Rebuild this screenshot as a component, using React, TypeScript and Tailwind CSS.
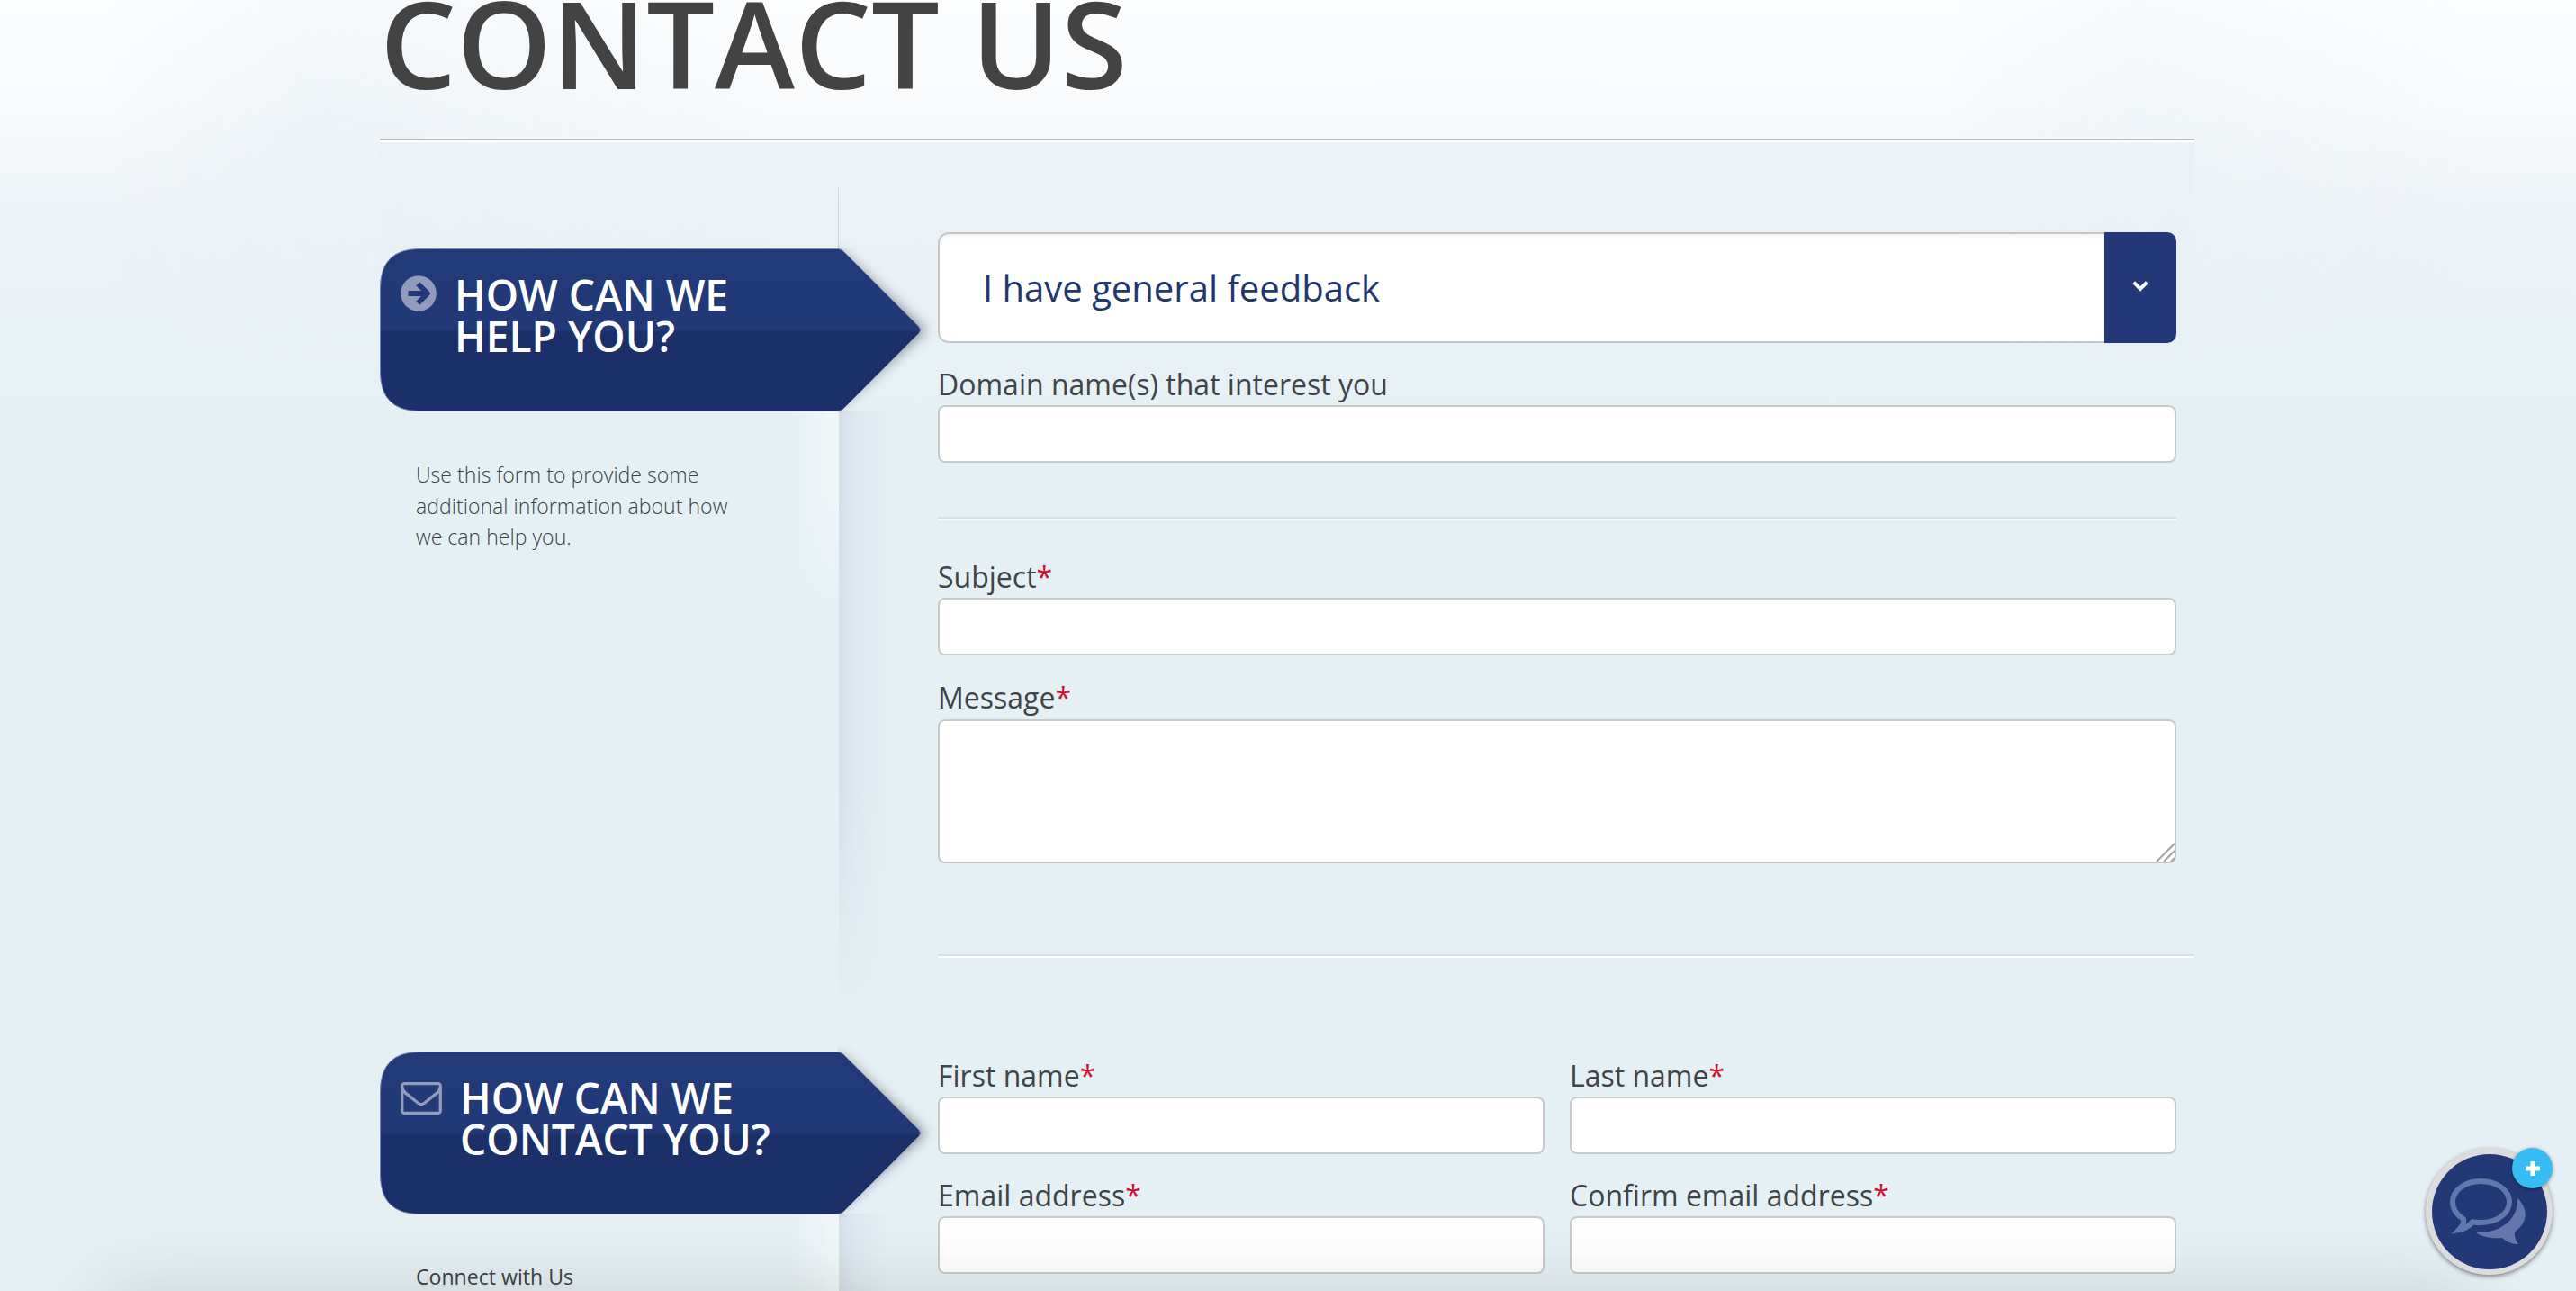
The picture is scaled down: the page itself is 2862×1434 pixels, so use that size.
import React from "react";

function ArrowCircleIcon() {
  return (
    <svg viewBox="0 0 40 40" className="block h-[40px] w-[40px]" aria-hidden="true">
      <circle cx="20" cy="20" r="19.800" fill="#919bbc" />
      <path d="M8.500 20H30M19.300 9.300L30 20L19.300 30.700" fill="none" stroke="#22387a" strokeWidth="5.800" strokeLinejoin="round" />
    </svg>
  );
}

function EnvelopeIcon() {
  return (
    <svg viewBox="0 256 1792 1408" className="block h-[36px] w-[46px] fill-white/50" aria-hidden="true">
      <path d="M1664 1504v-768q-32 36-69 66-268 206-426 338-51 43-83 67t-86.5 48.5-102.500 24.5h-2q-48 0-102.500-24.5t-86.5-48.5-83-67q-158-132-426-338-37-30-69-66v768q0 13 9.5 22.5t22.5 9.5h1472q13 0 22.5-9.5t9.5-22.5zm0-1051v-24.500l-.5-13-3-12.5-5.5-9-9-7.5-14-2.5h-1472q-13 0-22.5 9.5t-9.5 22.5q0 168 147 284 193 152 401 317 6 5 35 29.5t46 37.5 44.5 31.5 50.5 27.5 43 9h2q20 0 43-9t50.5-27.5 44.5-31.5 46-37.5 35-29.5q208-165 401-317 54-43 100.500-115.500t46.500-131.500zm128-37v1088q0 66-47 113t-113 47h-1472q-66 0-113-47t-47-113v-1088q0-66 47-113t113-47h1472q66 0 113 47t47 113z" />
    </svg>
  );
}

function Tag({ id, icon, first, second }: { id: string; icon: React.ReactNode; first: string; second: string }) {
  const shape =
    "M44 .5H509Q513 .5 516 4L599 87Q602 90.500 599 94L516 177Q513 180.500 509 180.500H44Q.5 180.500 .5 137V44Q.5 .5 44 .5Z";
  return (
    <div className="relative h-[181px] w-[601px]">
      <svg viewBox="0 0 601 181" className="absolute inset-0 h-[181px] w-[601px] overflow-visible" aria-hidden="true">
        <defs>
          <linearGradient id={id} x1="0" y1="0" x2="0" y2="1">
            <stop offset="0" stopColor="#223a78" />
            <stop offset=".495" stopColor="#223977" />
            <stop offset=".515" stopColor="#1b2f69" />
            <stop offset="1" stopColor="#1b2f69" />
          </linearGradient>
          <filter id={id + "-blur"} x="-10%" y="-20%" width="120%" height="140%">
            <feGaussianBlur stdDeviation="7" />
          </filter>
          <clipPath id={id + "-clip"}>
            <rect x="509" y="-10" width="130" height="200" />
          </clipPath>
        </defs>
        <g clipPath={`url(#${id}-clip)`}>
          <path d="M440 6H514L606 91L512 173H440Z" fill="#20262c" fillOpacity=".55" filter={`url(#${id}-blur)`} />
        </g>
        <path d={shape} fill={`url(#${id})`} stroke="#7285b4" strokeWidth="1" />
      </svg>
      <div className="relative flex pt-[29px] pl-[23px]">
        {icon}
        <h2 className="ml-[20px] text-[46.200px] leading-[46px] font-semibold whitespace-nowrap text-white">
          {first}
          <br />
          {second}
        </h2>
      </div>
    </div>
  );
}

function Label({ text, required }: { text: string; required?: boolean }) {
  return (
    <label className="block h-[39px] text-[32px] leading-[32px] text-[#3f4447]">
      {text}
      {required && <span className="text-[#cf1237]">*</span>}
    </label>
  );
}

function Field({ label, required }: { label: string; required?: boolean }) {
  return (
    <div>
      <Label text={label} required={required} />
      <input
        aria-label={label}
        className="block h-[64px] w-full rounded-[8px] border-2 border-[#c8c9cc] bg-white shadow-[inset_0_2px_2px_rgba(0,0,0,0.02)]"
      />
    </div>
  );
}

function Divider() {
  return (
    <div>
      <div className="h-[2px] bg-[#dadfe2]" />
      <div className="h-[2px] bg-white" />
    </div>
  );
}

/* Soft fold that separates the side column from the form */
function Fold({ className }: { className: string }) {
  return (
    <div className={"absolute left-[450px] flex w-[125px] " + className}>
      <div className="h-[220px] w-[60px] bg-linear-to-r from-white/0 from-10% to-white/45 to-85% [mask-image:linear-gradient(to_bottom,black_40%,transparent)]" />
      <div className="h-full w-[55px] bg-linear-to-r from-[#cbd5e2]/60 via-[#cbd5e2]/30 via-35% to-[#cbd5e2]/0 [mask-image:linear-gradient(to_bottom,black_60%,transparent_95%)]" />
    </div>
  );
}

export default function App() {
  return (
    <div className="relative h-[1434px] w-[2862px] overflow-hidden bg-[#e5f0f5] font-['Open_Sans',sans-serif]">
      <div className="absolute inset-x-0 top-0 h-[460px] bg-[linear-gradient(to_bottom,#fcfdfe_0%,#f8fafc_25%,#f3f7fa_38%,#ebf2f7_60%,#e5f0f5_100%)]" />
      <div className="absolute top-0 left-[120px] h-[420px] w-[2620px] bg-[linear-gradient(to_right,transparent,rgba(230,240,246,0.55)_9%,rgba(230,240,246,0.45)_13%,transparent_28%,transparent_78%,rgba(230,240,246,0.4)_86%,transparent)] [mask-image:linear-gradient(to_bottom,rgba(0,0,0,0.5),black_35%,transparent)]" />

      <main className="relative mx-[422px] w-[2016px]">
        <div className="flex h-[154px] flex-col">
          <h1 className="-mt-[20px] text-[134.400px] leading-[134px] font-semibold whitespace-nowrap text-[#434343]">CONTACT US</h1>
        </div>
        <div className="h-[2px] bg-[#bcbfc2]" />
        <div className="h-[2px] bg-white" />

        <section className="relative flex h-[902px] bg-linear-to-b from-[#e7f0f5]/50 to-[#e5f0f5]/0 to-30%">
          <div className="absolute top-[51px] left-[509px] h-[80px] w-px bg-[#d3d8dd]" />
          <Fold className="top-[298px] h-[700px]" />
          <aside className="relative w-[620px] pt-[118px]">
            <Tag
              id="tag-help"
              icon={
                <div className="pt-[1px]">
                  <ArrowCircleIcon />
                </div>
              }
              first="HOW CAN WE"
              second="HELP YOU?"
            />
            <p className="mt-[53px] ml-[40px] w-[360px] text-[23.100px] leading-[34.500px] font-light text-[#3a4044]">
              Use this form to provide some additional information about how we can help you.
            </p>
          </aside>

          <div className="w-[1396px] pt-[100px]">
            <div className="w-[1376px]">
              <div className="flex h-[123px]">
                <div className="flex flex-1 items-center rounded-l-[12px] border-2 border-r-0 border-[#c6c7ca] bg-white pl-[48px] text-[40px] text-[#22376f] shadow-[inset_0_4px_4px_-1px_rgba(0,0,0,0.05)]">
                  I have general feedback
                </div>
                <div className="flex w-[80px] items-center justify-center rounded-r-[10px] bg-[#233977]">
                  <svg viewBox="0 0 18 12" className="-mt-[3px] h-[12px] w-[18px]" aria-hidden="true">
                    <path d="M1.700 1.700L9 9L16.300 1.700" fill="none" stroke="#fff" strokeWidth="4" />
                  </svg>
                </div>
              </div>
              <div className="pt-[30px]">
                <Field label="Domain name(s) that interest you" />
              </div>
              <div className="pt-[60px]">
                <Divider />
              </div>
              <div className="pt-[47px]">
                <Field label="Subject" required />
              </div>
              <div className="relative pt-[31px]">
                <Label text="Message" required />
                <textarea
                  aria-label="Message"
                  className="mt-[1px] block h-[160px] w-full resize-none rounded-[8px] border-2 border-[#c8c9cc] bg-white"
                />
                <svg viewBox="0 0 22 22" className="absolute right-[1px] bottom-[1px] h-[22px] w-[22px]" aria-hidden="true">
                  <path d="M1 21L21 1M9 21L21 9M17 21L21 17" stroke="#a3a3a3" strokeWidth="2" fill="none" />
                </svg>
              </div>
            </div>
            <div className="pt-[101px]">
              <Divider />
            </div>
          </div>
        </section>

        <section className="relative flex h-[374px]">
          <Fold className="top-[288px] h-[700px]" />
          <aside className="relative w-[620px] pt-[108px]">
            <Tag
              id="tag-contact"
              icon={
                <div className="pt-[5px]">
                  <EnvelopeIcon />
                </div>
              }
              first="HOW CAN WE"
              second="CONTACT YOU?"
            />
            <p className="mt-[52px] ml-[40px] text-[23.100px] leading-[34px] whitespace-nowrap text-[#3a4044]">Connect with Us</p>
          </aside>
          <div className="grid w-[1376px] grid-cols-2 content-start gap-x-[28px] gap-y-[30px] pt-[119px]">
            <Field label="First name" required />
            <Field label="Last name" required />
            <Field label="Email address" required />
            <Field label="Confirm email address" required />
          </div>
        </section>
      </main>

      <div className="pointer-events-none absolute top-[1440px] left-[120px] h-[100px] w-[2622px] shadow-[0_0_80px_rgba(60,60,40,0.2)]" />

      <button aria-label="Chat" className="absolute top-[1275px] left-[2695px] flex h-[141px] w-[141px] items-center justify-center rounded-full bg-[#dcdcde] shadow-[0_2px_5px_rgba(0,0,0,0.45)]">
        <span className="flex h-[128px] w-[128px] items-center justify-center rounded-full bg-[#233977]">
          <svg viewBox="0 0 84 74" className="mt-[1px] -ml-[4px] h-[74px] w-[84px]" aria-hidden="true">
            <path
              d="M34 3C17 3 3 13 3 26C3 34 8 41 15 45C16 49 14 53 10 57C16 56 21 53 25 48.500C28 49 31 49 34 49C52 49 66 39 66 26C66 13 52 3 34 3Z"
              fill="none"
              stroke="#6477ac"
              strokeWidth="6"
            />
            <path d="M75 22C87 33 87 50 72 59C71 63 73 69 76 73C69 73 62 70 58 66C46 67 35 65 29 60C55 61 76 47 75 22Z" fill="#6477ac" />
          </svg>
        </span>
        <span className="absolute top-0 right-0 flex h-[45px] w-[45px] items-center justify-center rounded-full bg-[#37bdf3] shadow-[0_1px_4px_rgba(0,0,0,0.4)]">
          <svg viewBox="0 0 16 16" className="h-[16px] w-[16px]" aria-hidden="true">
            <path d="M5.500 0h5v5.500H16v5h-5.500V16h-5v-5.500H0v-5h5.500z" fill="#fff" />
          </svg>
        </span>
      </button>
    </div>
  );
}
